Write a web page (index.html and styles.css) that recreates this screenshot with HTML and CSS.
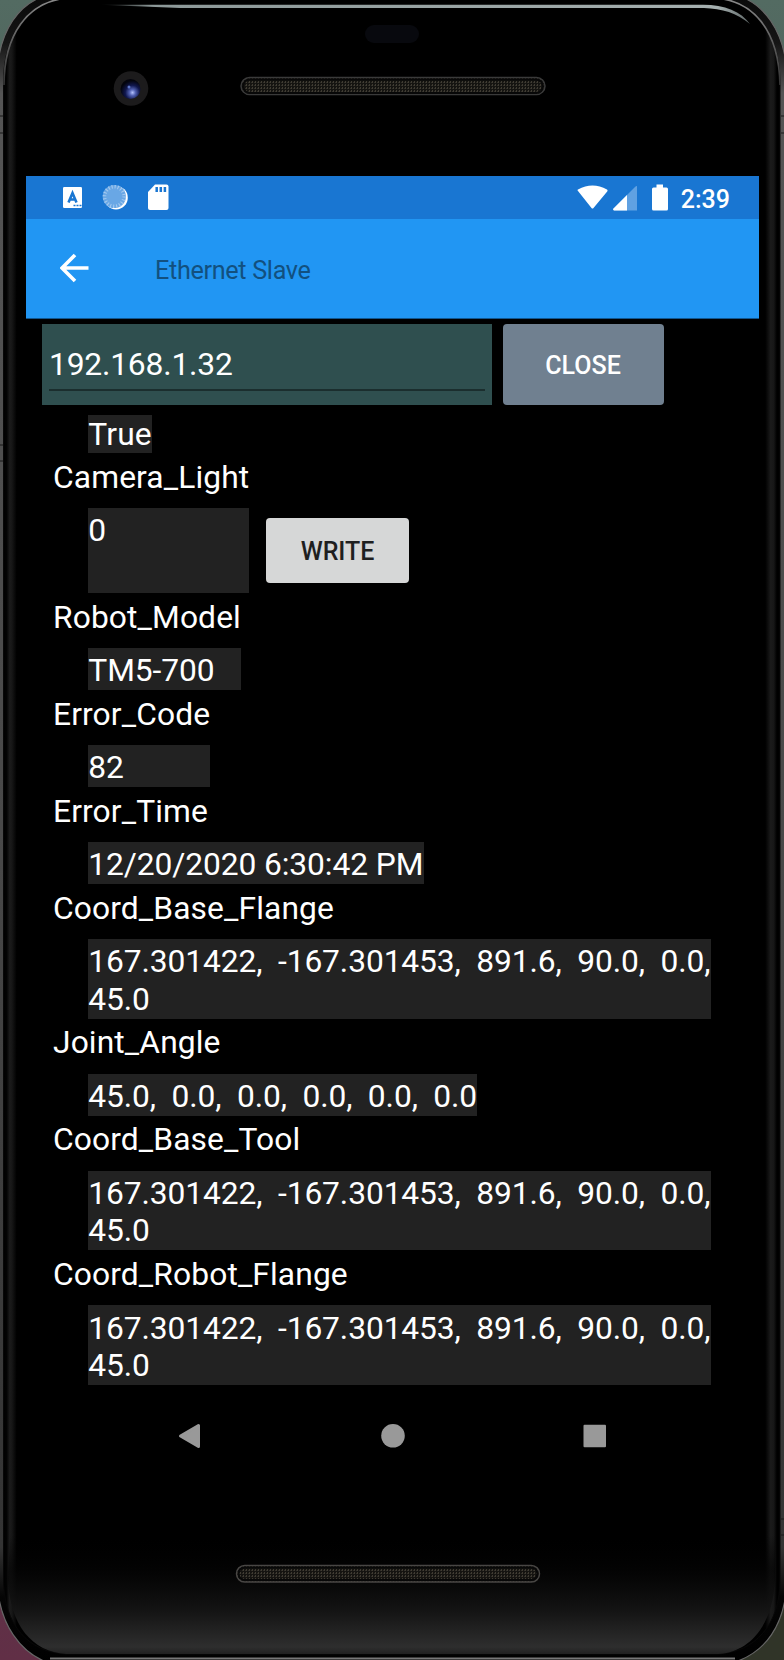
FILE: index.html
```html
<!DOCTYPE html>
<html lang="en">
<head>
<meta charset="utf-8">
<title>Ethernet Slave</title>
<link rel="stylesheet" href="styles.css">
</head>
<body>
<div class="phone">
  <svg class="phone-frame" width="784" height="1660" viewBox="0 0 784 1660" aria-hidden="true">
    <defs>
      <linearGradient id="wall" x1="0" y1="0" x2="0" y2="1"><stop offset="0" stop-color="#536b62"/><stop offset=".3" stop-color="#48524c"/><stop offset="1" stop-color="#612f46"/></linearGradient>
      <linearGradient id="rim" x1="0" y1="0" x2="0" y2="1"><stop offset="0" stop-color="#090909"/><stop offset=".03" stop-color="#151515"/><stop offset=".06" stop-color="#555"/><stop offset=".5" stop-color="#494949"/><stop offset=".93" stop-color="#343434"/><stop offset=".96" stop-color="#050505"/><stop offset="1" stop-color="#000"/></linearGradient>
      <linearGradient id="side" x1="0" y1="0" x2="1" y2="0"><stop offset="0" stop-color="#000"/><stop offset=".004" stop-color="#030303"/><stop offset=".008" stop-color="#1b1b1b"/><stop offset=".011" stop-color="#161616"/><stop offset=".017" stop-color="#000"/><stop offset=".981" stop-color="#000"/><stop offset=".988" stop-color="#1b1b1b"/><stop offset=".992" stop-color="#171717"/><stop offset=".996" stop-color="#000"/><stop offset="1" stop-color="#000"/></linearGradient>
      <linearGradient id="chin" x1="0" y1="0" x2="0" y2="1"><stop offset="0" stop-color="#000" stop-opacity="0"/><stop offset=".3" stop-color="#050505" stop-opacity=".7"/><stop offset=".65" stop-color="#151515"/><stop offset=".94" stop-color="#2e2e2e"/><stop offset="1" stop-color="#202020"/></linearGradient>
      <linearGradient id="shine" x1="0" y1="0" x2="1" y2="0"><stop offset="0" stop-color="#8c9898" stop-opacity="0"/><stop offset=".08" stop-color="#8c9898"/><stop offset=".95" stop-color="#a5afaf"/><stop offset="1" stop-color="#8c9898" stop-opacity=".7"/></linearGradient>
      <linearGradient id="edge" gradientUnits="userSpaceOnUse" x1="0" y1="0" x2="0" y2="85"><stop offset="0" stop-color="#888"/><stop offset="1" stop-color="#333"/></linearGradient>
      <radialGradient id="lens" cx=".6" cy=".68" r=".6"><stop offset="0" stop-color="#b5c3ff"/><stop offset=".25" stop-color="#5363b5"/><stop offset=".6" stop-color="#10174e"/><stop offset="1" stop-color="#03040c"/></radialGradient>
      <pattern id="mesh" width="3" height="3" patternUnits="userSpaceOnUse"><rect width="3" height="3" fill="#151411"/><rect width="1" height="2" fill="#403c33"/><rect x="2" y="1" width="1" height="1" fill="#302e28"/></pattern>
    </defs>
    <rect width="784" height="1660" fill="url(#wall)"/>
    <rect x="735" y="1600" width="49" height="60" fill="#303428"/>
    <path d="M-3 80C-3 34 18 -3 59 -7H725C764 -3 787 34 787 80V1575C787 1625 765 1655 728 1664H52C22 1655 -3 1625 -3 1575Z" fill="url(#rim)" stroke="#666" stroke-width="1.2"/>
    <path d="M3.500 80C4 35 27 2 67 -2H718C752 0 779 30 780 80V1580C780 1625 755 1652 718 1654H66C28 1652 4 1625 3.500 1580Z" fill="url(#side)" stroke="#080808"/>
    <path d="M4 85C4 35 27 2 67 -2M714 -2C753 0 779 30 780 85" fill="none" stroke="url(#edge)" stroke-width="1.700"/>
    <path d="M10 1535H775V1580C773 1625 750 1652 718 1654H66C32 1652 10 1625 8 1580Z" fill="url(#chin)"/>
    <path d="M50 1658.500H735" stroke="#777" stroke-width="2"/>
    <path d="M0 116H3M0 133H3M781 116H784M781 133H784M0 445H3M0 461H3M781 1519H784M781 1535H784" stroke="#181818"/>
    <path d="M100 4.700H700C723 4 741 11 750 24C737 13 722 8.500 704 8H180Z" fill="url(#shine)"/>
    <rect x="365" y="25" width="54" height="18" rx="9" fill="#08090e"/>
    <circle cx="131" cy="88.500" r="17.300" fill="#1c1b1c"/>
    <circle cx="130.500" cy="89" r="10" fill="url(#lens)"/>
    <circle cx="129" cy="87" r="1.500" fill="#5e77c8"/>
    <rect x="241" y="77.500" width="304" height="17" rx="8.500" fill="url(#mesh)" stroke="#3a3a3a" stroke-width="1.500"/>
    <rect x="243" y="79.500" width="300" height="13.500" rx="6.700" fill="none" stroke="#080808" stroke-width="2"/>
    <rect x="236.500" y="1565.500" width="303" height="16.500" rx="8.200" fill="url(#mesh)" stroke="#484644" stroke-width="1.500"/>
    <rect x="238.500" y="1567.500" width="299" height="12.500" rx="6.200" fill="none" stroke="#080808" stroke-width="2"/>
  </svg>

  <main class="screen">
    <div class="status-bar">
      <div class="notifications">
        <svg width="106" height="27" viewBox="0 0 106 27" aria-hidden="true">
          <rect y="3" width="19" height="21" rx="1.300" fill="#fff"/>
          <path d="M5.500 18.500L9.500 9L13.500 18.500M6.800 15.500H12.200" fill="none" stroke="#1976d2" stroke-width="2.600"/>
          <path d="M10.500 21.500H12.500M13.500 21.500H15.500M16.500 21.500H18.500" stroke="#1976d2" stroke-width="1.600"/>
          <circle cx="53" cy="13.700" r="11.800" fill="#fff"/>
          <circle cx="51.300" cy="12.500" r="11.600" fill="#69a7e5"/>
          <circle cx="51.300" cy="12.500" r="9.800" fill="none" stroke="#a4c9ef" stroke-width="3.600" stroke-dasharray="1.100 1.980"/>
          <path d="M92 .5H103.500Q105.500 .5 105.500 2.500V24Q105.500 26 103.500 26H87Q85 26 85 24V8Z" fill="#fff"/>
          <path d="M93.700 3V8M97.800 3V8M101.900 3V8" stroke="#1976d2" stroke-width="2.500"/>
        </svg>
      </div>
      <div class="system-icons">
        <svg width="91" height="27" viewBox="0 0 91 27" aria-hidden="true">
          <path d="M1 7Q0 6.300 1 5.600Q15.500-2.800 30 5.600Q31 6.300 30.200 7.400L16.500 24Q15.500 25.100 14.500 24Z" fill="#fff"/>
          <path d="M60 2V26.500H37Q35.300 26 36.500 24.600L58.500 2.600Q59.500 1.700 60 2Z" fill="#60a1e2"/>
          <path d="M50 11V26.500H37Q35.300 26 36.500 24.600Z" fill="#fff"/>
          <path d="M79.500 .5H86V3.500H89.500Q91 3.500 91 5V25Q91 26.500 89.500 26.500H76.500Q75 26.500 75 25V5Q75 3.500 76.500 3.500H79.500Z" fill="#fff"/>
        </svg>
        <span class="clock">2:39</span>
      </div>
    </div>
    <header class="toolbar">
      <svg class="back" width="30" height="30" viewBox="0 0 30 30" aria-hidden="true"><path d="M28.500 15H3M15 2L2 15L15 28" fill="none" stroke="#fff" stroke-width="3.600"/></svg>
      <h1 class="title">Ethernet Slave</h1>
    </header>
    <div class="connection">
      <div class="address"><div class="address-value">192.168.1.32</div></div>
      <button class="button close">CLOSE</button>
    </div>
    <section class="values">
      <div class="value first">True</div>
      <div class="label">Camera_Light</div>
      <div class="write-row">
        <div class="value camera">0</div>
        <button class="button write">WRITE</button>
      </div>
      <div class="group"><div class="label">Robot_Model</div><div class="value">TM5-700</div></div>
      <div class="group"><div class="label">Error_Code</div><div class="value">82</div></div>
      <div class="group"><div class="label">Error_Time</div><div class="value">12/20/2020 6:30:42 PM</div></div>
      <div class="group"><div class="label">Coord_Base_Flange</div><div class="value double">167.301422,  -167.301453,  891.6,  90.0,  0.0,
45.0</div></div>
      <div class="group"><div class="label">Joint_Angle</div><div class="value">45.0,  0.0,  0.0,  0.0,  0.0,  0.0</div></div>
      <div class="group"><div class="label">Coord_Base_Tool</div><div class="value double">167.301422,  -167.301453,  891.6,  90.0,  0.0,
45.0</div></div>
      <div class="group"><div class="label">Coord_Robot_Flange</div><div class="value double">167.301422,  -167.301453,  891.6,  90.0,  0.0,
45.0</div></div>
    </section>
    <nav class="nav-bar">
      <svg width="24" height="26" viewBox="0 0 24 26" aria-hidden="true"><path d="M20.500 2.500V23.500L2.500 13Z" fill="#999" stroke="#999" stroke-width="3" stroke-linejoin="round"/></svg>
      <svg width="24" height="26" viewBox="0 0 24 26" aria-hidden="true"><circle cx="12" cy="12.800" r="11.800" fill="#999"/></svg>
      <svg width="24" height="26" viewBox="0 0 24 26" aria-hidden="true"><rect x=".5" y="1.800" width="22.500" height="22.500" rx="1" fill="#999"/></svg>
    </nav>
  </main>
</div>
</body>
</html>
```
FILE: styles.css
```css
* { box-sizing: border-box; }
body {
  margin: 0;
  background: #000;
  color: #fff;
  font-family: Roboto, "Noto Sans", sans-serif;
}
.phone {
  position: relative;
  width: 784px;
  height: 1660px;
  overflow: hidden;
  padding: 176px 25px 0 26px;
}
.phone-frame {
  position: absolute;
  inset: 0;
  display: block;
}
.screen {
  position: relative;
  display: flex;
  flex-direction: column;
  height: 1304px;
}
.status-bar {
  display: flex;
  justify-content: space-between;
  height: 43px;
  padding: 8px 29px 0 37px;
  background: #1976d2;
}
.notifications svg, .system-icons svg { display: block; }
.system-icons {
  display: flex;
  gap: 13px;
}
.clock {
  font-size: 25px;
  line-height: 31px;
  font-weight: 500;
}
.toolbar {
  display: flex;
  height: 99.500px;
  padding: 34px 34px 0;
  background: #2196f3;
  border-bottom: 1px solid #105690;
}
.back { display: block; }
.title {
  margin: 3px 0 0 65px;
  color: #12507f;
  font-size: 25.200px;
  line-height: 30px;
  font-weight: 400;
  letter-spacing: -.32px;
}
.connection {
  display: flex;
  gap: 11px;
  height: 81px;
  margin: 5.500px 0 0 16px;
}
.address {
  width: 450px;
  padding: 0 7px;
  background: #2f4f4f;
}
.address-value {
  height: 67px;
  padding: 22px 0 0;
  border-bottom: 2px solid #1b2e2e;
  font-size: 31.800px;
  line-height: 37.300px;
  letter-spacing: -.2px;
}
.button {
  border: 0;
  border-radius: 4px;
  font: 500 25px/30px Roboto, sans-serif;
}
.close {
  width: 161px;
  padding: 3px 1px 0 0;
  background: #708090;
  color: #fff;
}
.values {
  display: flex;
  flex-direction: column;
  align-items: flex-start;
  padding: 10px 0 0 27px;
  font-size: 31.750px;
  line-height: 37.300px;
}
.label {
  height: 55px;
  padding-top: 5.500px;
  letter-spacing: .12px;
}
.value {
  min-width: calc(100% - 35px);
  height: 42px;
  margin-left: 35.300px;
  padding-top: 4.400px;
  background: #222;
  white-space: pre;
  letter-spacing: -.1px;
}
.first {
  min-width: 0;
  height: 38px;
  padding-top: 1px;
  letter-spacing: .15px;
}
.double { height: 79.600px; }
.write-row {
  display: flex;
  gap: 17px;
}
.camera {
  min-width: 0;
  width: 160.500px;
  height: 85px;
}
.write {
  width: 143.500px;
  height: 65px;
  margin-top: 10px;
  padding: 2px 0 0;
  background: #d6d7d7;
  color: #1f1f1f;
}
.nav-bar {
  display: flex;
  justify-content: space-between;
  padding: 38px 152px 0 152px;
}
```
